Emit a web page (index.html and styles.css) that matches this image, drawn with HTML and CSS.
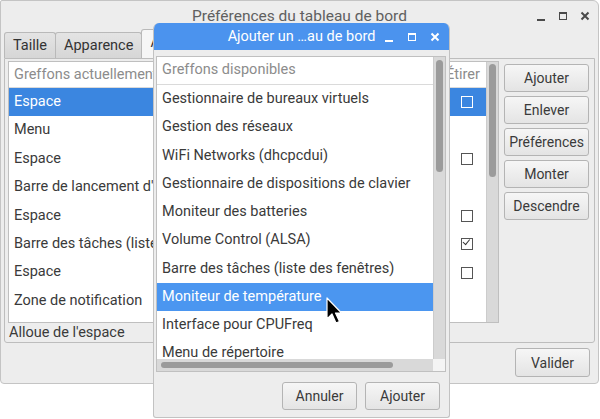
FILE: index.html
```html
<!DOCTYPE html>
<html lang="fr">
<head>
    <meta charset="UTF-8">
    <title>Préférences du tableau de bord</title>
    <link rel="stylesheet" href="styles.css">
</head>
<body>
<div class="desktop">
    <!-- main preferences window -->
    <div class="window main-win">
        <div class="titlebar">
            <span class="title">Préférences du tableau de bord</span>
            <div class="controls">
                <svg width="10" height="10" viewBox="0 0 10 10"><rect x="1" y="8" width="8" height="2" fill="#4a4a4a"/></svg>
                <svg width="10" height="10" viewBox="0 0 10 10"><rect x="1.5" y="1.5" width="7" height="7" fill="none" stroke="#4a4a4a"/><rect x="1" y="1" width="8" height="2" fill="#4a4a4a"/></svg>
                <svg width="10" height="10" viewBox="0 0 10 10"><path d="M1.5 1.5 L8.5 8.5 M8.5 1.5 L1.5 8.5" stroke="#4a4a4a" stroke-width="2"/></svg>
            </div>
        </div>
        <div class="win-body">
            <div class="tabs">
                <div class="tab">Taille</div>
                <div class="tab">Apparence</div>
                <div class="tab active">Applets</div>
            </div>
            <div class="tab-panel">
                <div class="panel-row">
                    <div class="tree">
                        <div class="tree-list">
                            <div class="tree-head">
                                <span class="col-name">Greffons actuellement dans le tableau de bord</span>
                                <span class="col-stretch">Étirer</span>
                            </div>
                            <div class="row selected"><span class="col-name">Espace</span><span class="col-stretch"><i class="check"></i></span></div>
                            <div class="row"><span class="col-name">Menu</span><span class="col-stretch"></span></div>
                            <div class="row"><span class="col-name">Espace</span><span class="col-stretch"><i class="check"></i></span></div>
                            <div class="row"><span class="col-name">Barre de lancement d'applications</span><span class="col-stretch"></span></div>
                            <div class="row"><span class="col-name">Espace</span><span class="col-stretch"><i class="check"></i></span></div>
                            <div class="row"><span class="col-name">Barre des tâches (liste des fenêtres)</span><span class="col-stretch"><i class="check on"></i></span></div>
                            <div class="row"><span class="col-name">Espace</span><span class="col-stretch"><i class="check"></i></span></div>
                            <div class="row"><span class="col-name">Zone de notification</span><span class="col-stretch"></span></div>
                        </div>
                        <div class="vscroll"><div class="vthumb main-thumb"></div></div>
                    </div>
                    <div class="side-buttons">
                        <button class="btn">Ajouter</button>
                        <button class="btn">Enlever</button>
                        <button class="btn">Préférences</button>
                        <button class="btn">Monter</button>
                        <button class="btn">Descendre</button>
                    </div>
                </div>
                <div class="status">Alloue de l'espace</div>
            </div>
            <div class="footer">
                <button class="btn wide">Valider</button>
            </div>
        </div>
    </div>

    <!-- add plugin dialog -->
    <div class="window dialog">
        <div class="titlebar blue">
            <span class="title">Ajouter un …au de bord</span>
            <div class="controls">
                <svg width="10" height="10" viewBox="0 0 10 10"><rect x="1" y="8" width="8" height="2" fill="#fff"/></svg>
                <svg width="10" height="10" viewBox="0 0 10 10"><rect x="1.5" y="1.5" width="7" height="7" fill="none" stroke="#fff"/><rect x="1" y="1" width="8" height="2" fill="#fff"/></svg>
                <svg width="10" height="10" viewBox="0 0 10 10"><path d="M1.5 1.5 L8.5 8.5 M8.5 1.5 L1.5 8.5" stroke="#fff" stroke-width="2"/></svg>
            </div>
        </div>
        <div class="dialog-body">
            <div class="plugin-frame">
                <div class="plugin-top">
                    <div class="plugin-list">
                        <div class="tree-head"><span class="col-name">Greffons disponibles</span></div>
                        <div class="row">Gestionnaire de bureaux virtuels</div>
                        <div class="row">Gestion des réseaux</div>
                        <div class="row">WiFi Networks (dhcpcdui)</div>
                        <div class="row">Gestionnaire de dispositions de clavier</div>
                        <div class="row">Moniteur des batteries</div>
                        <div class="row">Volume Control (ALSA)</div>
                        <div class="row">Barre des tâches (liste des fenêtres)</div>
                        <div class="row picked">Moniteur de température</div>
                        <div class="row">Interface pour CPUFreq</div>
                        <div class="row">Menu de répertoire</div>
                    </div>
                    <div class="vscroll"><div class="vthumb dlg-thumb"></div></div>
                </div>
                <div class="hscroll">
                    <div class="htrack"><div class="hthumb"></div></div>
                    <div class="corner"></div>
                </div>
            </div>
            <div class="dialog-buttons">
                <button class="btn">Annuler</button>
                <button class="btn">Ajouter</button>
            </div>
        </div>
    </div>

    <svg class="cursor" width="16" height="28" viewBox="0 0 16 28">
        <path d="M1 1 L1 22 L6 17 L10 26 L13.5 24.5 L9.5 16 L15.5 16 Z" fill="#000" stroke="#fff" stroke-width="1.2" stroke-linejoin="round"/>
    </svg>
</div>
</body>
</html>
```

FILE: styles.css
```css
body {
    margin: 0;
    background: #ffffff;
    font-family: Roboto, "Liberation Sans", sans-serif;
    font-size: 14px;
    color: #3a3a3a;
}
.desktop {
    position: relative;
    width: 600px;
    height: 419px;
    overflow: hidden;
}
.window {
    position: absolute;
    box-sizing: border-box;
    background: #ededed;
    display: flex;
    flex-direction: column;
}
.main-win {
    left: 0;
    top: 0;
    width: 599px;
    height: 384px;
    border: 1px solid #c4c4c4;
    border-radius: 2px 6px 4px 4px;
}
.titlebar {
    position: relative;
    height: 29px;
    display: flex;
    align-items: center;
    justify-content: center;
    flex: none;
}
.titlebar .title {
    font-size: 15.5px;
    color: #606060;
}
.controls {
    position: absolute;
    right: 8px;
    top: 10px;
    display: flex;
    gap: 12px;
}
.controls svg {
    display: block;
}
.win-body {
    flex: 1;
    display: flex;
    flex-direction: column;
    padding: 0 3px 0 3px;
}

/* tabs */
.tabs {
    display: flex;
    height: 28px;
    align-items: flex-end;
}
.tab {
    box-sizing: border-box;
    height: 26px;
    padding: 0 8px;
    line-height: 26px;
    border: 1px solid #b9b9b9;
    border-bottom: none;
    border-radius: 3px 3px 0 0;
    background: linear-gradient(#e4e4e4, #d6d6d6);
    color: #333;
    font-size: 14.5px;
}
.tab + .tab {
    margin-left: -1px;
}
.tab.active {
    height: 29px;
    background: #f6f6f6;
    padding-right: 40px;
}
.tab-panel {
    box-sizing: border-box;
    height: 285px;
    border: 1px solid #bdbdbd;
    border-radius: 0 0 3px 3px;
    display: flex;
    flex-direction: column;
}
.panel-row {
    display: flex;
    padding: 2px 0 0 3px;
    height: 262px;
}

/* tree view */
.tree {
    box-sizing: border-box;
    width: 491px;
    height: 262px;
    border: 1px solid #bfbfbf;
    background: #fff;
    display: flex;
}
.tree-list {
    flex: 1;
    overflow: hidden;
}
.tree-head {
    display: flex;
    height: 25px;
    line-height: 25px;
    border-bottom: 1px solid #dadada;
    color: #8c8c8c;
    font-size: 14.5px;
}
.row {
    display: flex;
    height: 28.4px;
    line-height: 28px;
    font-size: 14.5px;
    white-space: nowrap;
}
.col-name {
    flex: 1;
    padding-left: 5px;
    white-space: nowrap;
    overflow: hidden;
}
.col-stretch {
    width: 40px;
    flex: none;
    display: flex;
    align-items: center;
    justify-content: center;
}
.tree-head .col-stretch {
    justify-content: flex-start;
    border-left: 1px solid #e6e6e6;
    padding-left: 2px;
}
.row.selected {
    background: #3b86e0;
    color: #fff;
}
.check {
    box-sizing: border-box;
    display: block;
    width: 12px;
    height: 12px;
    border: 1px solid #555;
    margin-left: 1px;
    position: relative;
}
.row.selected .check {
    border-color: #fff;
}
.check.on::after {
    content: "";
    position: absolute;
    left: 2px;
    top: 1px;
    width: 6px;
    height: 3px;
    border-left: 1.5px solid #333;
    border-bottom: 1.5px solid #333;
    transform: rotate(-50deg);
    transform-origin: 30% 70%;
}
.vscroll {
    width: 11px;
    flex: none;
    background: #d9d9d9;
    border-left: 1px solid #cccccc;
    position: relative;
}
.vthumb {
    position: absolute;
    left: 2px;
    width: 7px;
    border-radius: 4px;
    background: #9b9b9b;
}
.main-thumb {
    top: 2px;
    height: 113px;
}
.dlg-thumb {
    top: 3px;
    height: 112px;
}

/* side buttons */
.side-buttons {
    display: flex;
    flex-direction: column;
    gap: 4px;
    margin-left: 5px;
    margin-top: 3px;
}
.btn {
    box-sizing: border-box;
    width: 85px;
    height: 28px;
    padding: 0;
    border: 1px solid #b4b4b4;
    border-radius: 3px;
    background: linear-gradient(#f6f6f6, #e4e4e4);
    font-family: Roboto, "Liberation Sans", sans-serif;
    font-size: 14px;
    color: #3a3a3a;
}
.btn.wide {
    width: 75px;
    height: 29px;
}
.status {
    padding-left: 4px;
    line-height: 19px;
    font-size: 14.5px;
    color: #3a3a3a;
}
.footer {
    display: flex;
    justify-content: flex-end;
    padding: 5px 5px 0 0;
}

/* dialog */
.dialog {
    left: 153px;
    top: 23px;
    width: 297px;
    height: 395px;
    border: 1px solid #c2c2c2;
    border-top: none;
    border-radius: 6px 6px 3px 3px;
    overflow: hidden;
}
.titlebar.blue {
    height: 27px;
    background: #4b93ee;
}
.titlebar.blue .title {
    color: #fff;
    font-size: 14.5px;
}
.dialog .controls {
    top: 9px;
    right: 9px;
    gap: 13px;
}
.dialog-body {
    flex: 1;
    padding: 6px 3px 0 2px;
    display: flex;
    flex-direction: column;
}
.plugin-frame {
    box-sizing: border-box;
    height: 316px;
    border: 1px solid #c0c0c0;
    background: #fff;
    display: flex;
    flex-direction: column;
}
.plugin-top {
    flex: 1;
    display: flex;
    overflow: hidden;
}
.plugin-list {
    flex: 1;
    overflow: hidden;
}
.plugin-list .tree-head {
    height: 27px;
    line-height: 26px;
}
.plugin-list .row {
    height: 28.25px;
    padding-left: 5px;
}
.row.picked {
    background: #4b96f0;
    color: #fff;
}
.hscroll {
    height: 12px;
    flex: none;
    display: flex;
}
.htrack {
    flex: 1;
    background: #d9d9d9;
    position: relative;
}
.hthumb {
    position: absolute;
    left: 4px;
    top: 3px;
    width: 232px;
    height: 6px;
    border-radius: 3px;
    background: #9b9b9b;
}
.corner {
    width: 12px;
    background: #f4f4f4;
}
.dialog-buttons {
    display: flex;
    justify-content: flex-end;
    gap: 8px;
    padding: 10px 6px 0 0;
}
.dialog-buttons .btn {
    width: 75px;
    height: 28px;
}
.cursor {
    position: absolute;
    left: 326px;
    top: 297px;
}
```
